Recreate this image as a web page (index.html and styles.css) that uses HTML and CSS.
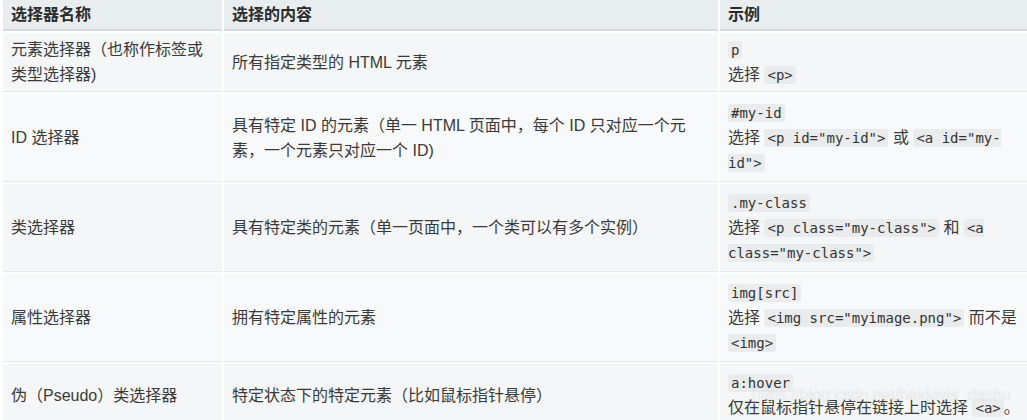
FILE: index.html
```html
<!DOCTYPE html>
<html lang="zh-CN">
<head>
    <meta charset="UTF-8">
    <meta name="viewport" content="width=device-width, initial-scale=1.0">
    <title>CSS 选择器</title>
    <link rel="stylesheet" href="styles.css">
</head>
<body>
    <table class="selectors">
        <thead>
            <tr>
                <th class="col-name">选择器名称</th>
                <th class="col-desc">选择的内容</th>
                <th class="col-demo">示例</th>
            </tr>
        </thead>
        <tbody>
            <tr class="short">
                <td>元素选择器（也称作标签或类型选择器)</td>
                <td>所有指定类型的 HTML 元素</td>
                <td><code>p</code><br>选择 <code>&lt;p&gt;</code></td>
            </tr>
            <tr>
                <td>ID 选择器</td>
                <td>具有特定 ID 的元素（单一 HTML 页面中，每个 ID 只对应一个元素，一个元素只对应一个 ID)</td>
                <td><code>#my-id</code><br>选择 <code>&lt;p id="my-id"&gt;</code> 或 <code>&lt;a id="my-id"&gt;</code></td>
            </tr>
            <tr>
                <td>类选择器</td>
                <td>具有特定类的元素（单一页面中，一个类可以有多个实例）</td>
                <td><code>.my-class</code><br>选择 <code>&lt;p class="my-class"&gt;</code> 和 <code>&lt;a class="my-class"&gt;</code></td>
            </tr>
            <tr>
                <td>属性选择器</td>
                <td>拥有特定属性的元素</td>
                <td><code>img[src]</code><br>选择 <code>&lt;img src="myimage.png"&gt;</code> 而不是 <code>&lt;img&gt;</code></td>
            </tr>
            <tr>
                <td>伪（Pseudo）类选择器</td>
                <td>特定状态下的特定元素（比如鼠标指针悬停）</td>
                <td><code>a:hover</code><br>仅在鼠标指针悬停在链接上时选择 <code>&lt;a&gt;</code>。</td>
            </tr>
        </tbody>
    </table>
    <span class="watermark">https://blog.csdn.net/haidavis_dashu</span>
</body>
</html>
```

FILE: styles.css
```css
html, body {
    margin: 0;
    overflow: hidden;
}
body {
    font-family: "Liberation Sans", "Noto Sans CJK SC", sans-serif;
    font-size: 16px;
    color: #3a3a3a;
    background: #fff;
    position: relative;
    height: 420px;
}
.selectors {
    table-layout: fixed;
    width: 1035px;
    border-collapse: separate;
    border-spacing: 2px;
    margin: -2px 0 0 1px;
}
.selectors th,
.selectors td {
    box-sizing: border-box;
    text-align: left;
    vertical-align: middle;
    line-height: 25px;
}
.selectors th {
    background-color: #e8edf0;
    color: #2b2b2b;
    font-weight: bold;
    padding: 2px 8px;
    border-bottom: 2px solid #d3dbe1;
}
.col-name { width: 219px; }
.col-desc { width: 494px; }
.col-demo { width: 316px; }
.selectors td {
    background-color: #f4f6f8;
    padding: 6px 8px;
    border-bottom: 1px solid #e5e8eb;
}
.selectors tbody tr:nth-child(even) td {
    background-color: #f8f9fb;
}
.selectors tr.short td {
    padding: 4px 8px;
}
code {
    font-family: "DejaVu Sans Mono", "Liberation Mono", monospace;
    font-size: 14px;
    line-height: 16px;
    color: #333;
    background-color: #e9ebed;
    padding: 1px 3px;
    border-radius: 3px;
}
.watermark {
    position: absolute;
    left: 752px;
    top: 386px;
    font-size: 16px;
    color: rgba(255, 255, 255, 0.55);
    text-shadow: 0 0 1px rgba(120, 120, 120, 0.25);
    pointer-events: none;
}
```
